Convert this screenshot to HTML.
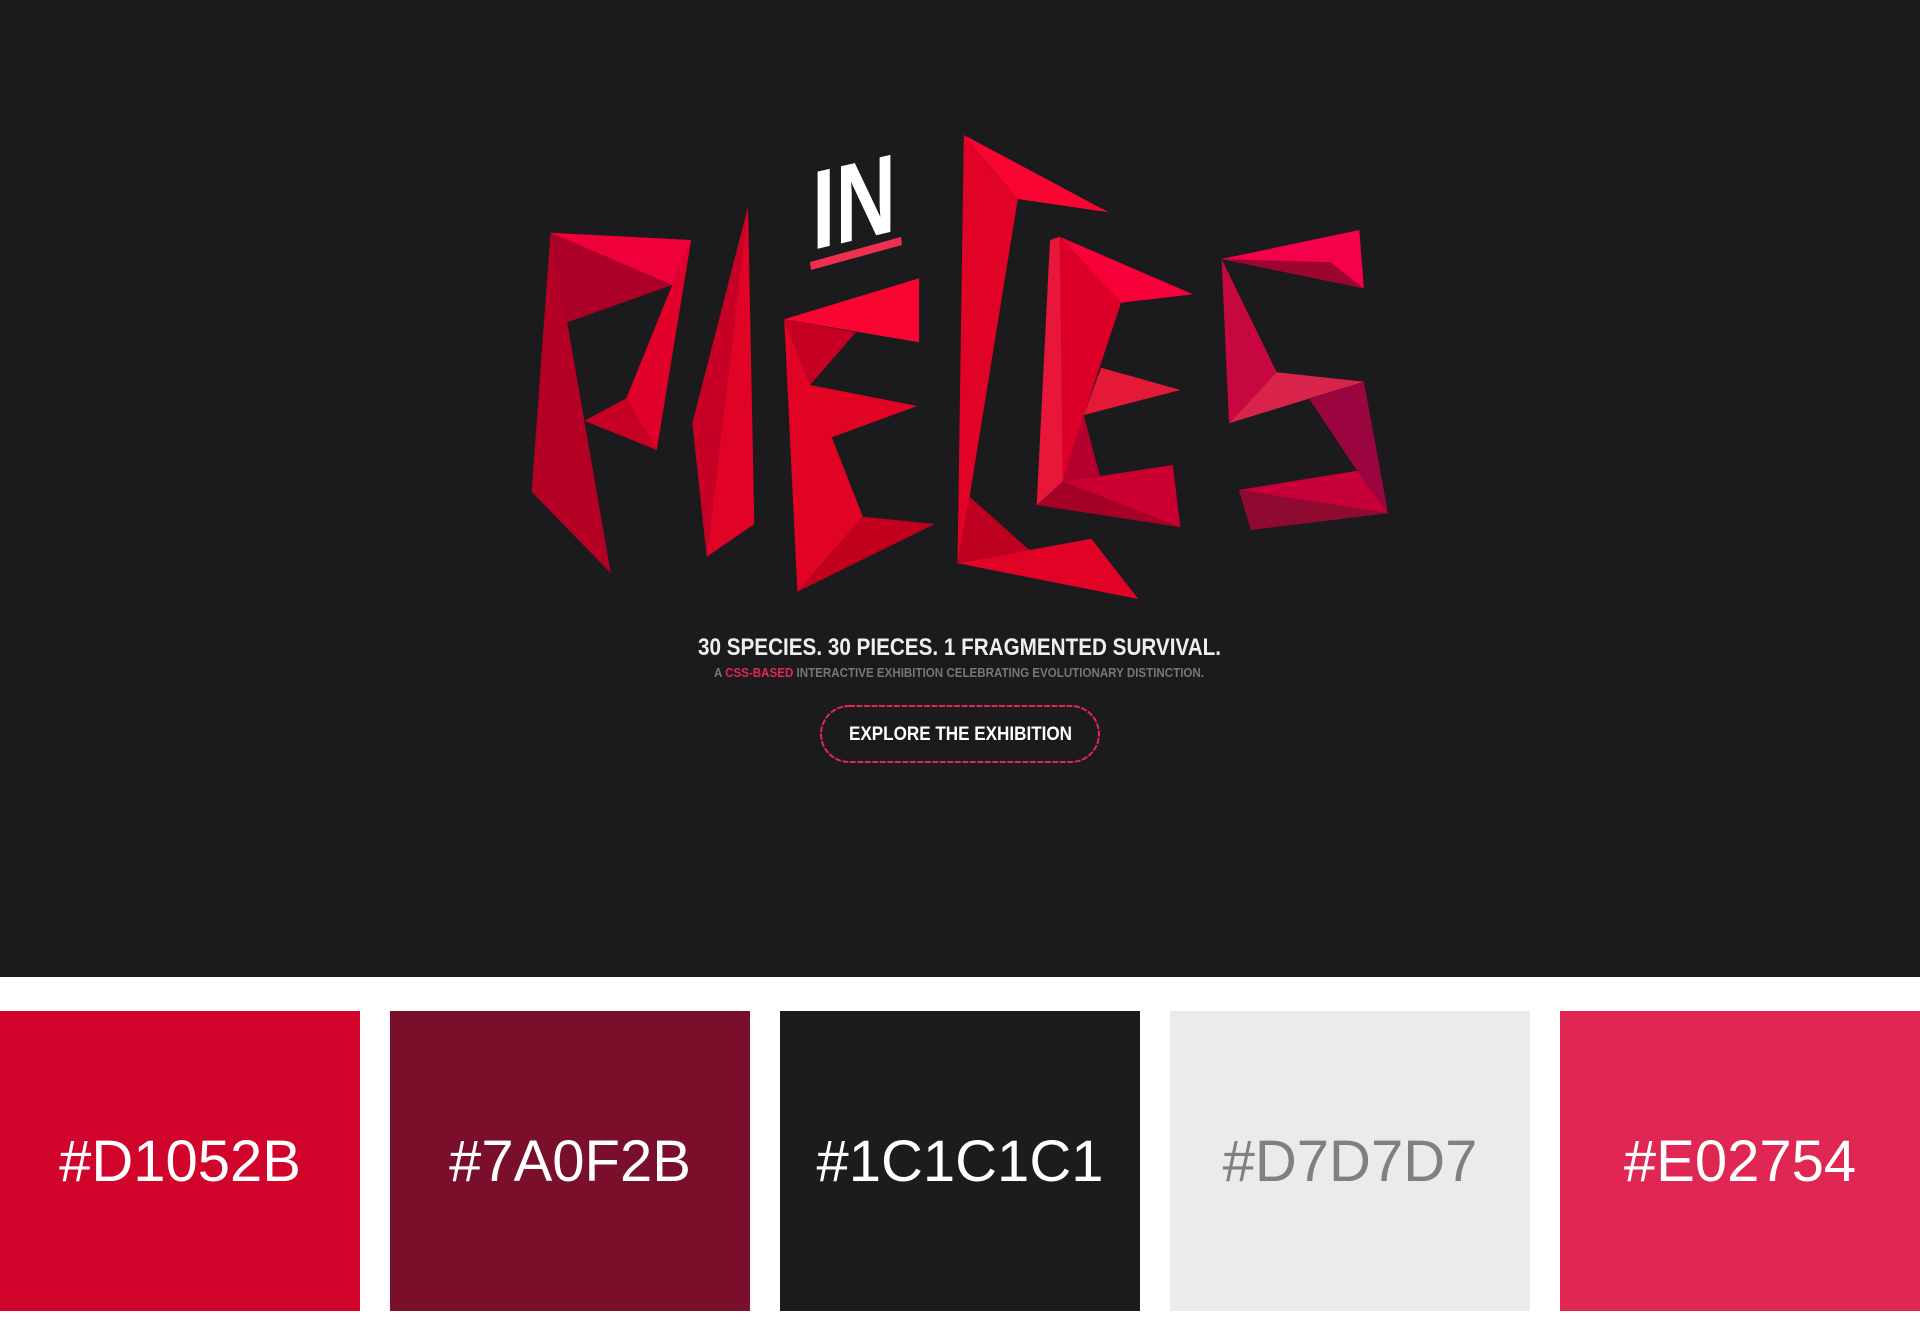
<!DOCTYPE html>
<html><head><meta charset="utf-8"><style>
html,body{margin:0;padding:0;background:#fff;width:1920px;height:1340px;overflow:hidden}
.sw{position:absolute;top:1011px;width:360px;height:300px;display:flex;align-items:center;justify-content:center;font-family:"Liberation Sans",sans-serif;font-size:58px;color:#fff}
</style></head><body>
<svg style="position:absolute;left:0;top:0" width="1920" height="977" viewBox="0 0 1920 977">
<rect width="1920" height="977" fill="#1b1b1d"/>
<!-- P -->
<polygon points="550.5,232.7 691.2,240 672.2,285" fill="#f0003a"/>
<polygon points="550.5,232.7 672.2,285 567.2,322.3" fill="#ad0028"/>
<polygon points="691.2,240 656.7,450 626.3,398.3 672.2,285" fill="#e0002a"/>
<polygon points="626.3,398.3 584.4,420.7 656.7,450" fill="#c80025"/>
<polygon points="550.5,232.7 567.2,322.3 610.8,573.3 531.6,491.7" fill="#b50025"/>
<!-- I -->
<polygon points="748,206.7 692.3,423.3 706.7,556.7" fill="#c70025"/>
<polygon points="748,206.7 706.7,556.7 754.3,524" fill="#e00326"/>
<!-- E -->
<polygon points="784.2,319.3 810,385 917.3,406 831.8,437.3 862.8,516.7 797.4,591.7" fill="#e00324"/>
<polygon points="784.2,319.3 919.1,278.3 919.1,342.3" fill="#f80532"/>
<polygon points="784.2,319.3 855.9,332.3 810,385" fill="#c50022"/>
<polygon points="862.8,516.7 934.6,524 797.4,591.7" fill="#c0001d"/>
<!-- C -->
<polygon points="963.8,135 1108.5,212.3 1017.8,199" fill="#f80532"/>
<polygon points="963.8,135 1017.8,199 969.6,496.7 957.5,563.3" fill="#e00326"/>
<polygon points="969.6,496.7 1029.3,550 957.5,563.3" fill="#bd0020"/>
<polygon points="957.5,563.3 1091.3,538.7 1138.3,599" fill="#e00326"/>
<!-- E2 -->
<polygon points="1059.7,236.7 1121.1,302.7 1083.8,415 1062.6,481.7 1036.7,505" fill="#dc0028"/>
<polygon points="1059.7,236.7 1050,240 1036.7,505 1062.6,481.7" fill="#e8173a"/>
<polygon points="1059.7,236.7 1192.9,294.3 1121.1,302.7" fill="#f8003a"/>
<polygon points="1101,367.7 1180.3,390 1083.8,415" fill="#e41837"/>
<polygon points="1083.8,415 1099.9,476 1062.6,481.7" fill="#b5002f"/>
<polygon points="1062.6,481.7 1172.8,465 1180.3,527.3" fill="#cc0030"/>
<polygon points="1036.7,505 1062.6,481.7 1180.3,527.3" fill="#a50025"/>
<!-- S -->
<polygon points="1221.6,259 1359.3,230 1363.9,288.3" fill="#f5004a"/>
<polygon points="1221.6,259 1330.6,262.3 1363.9,288.3" fill="#9c0530"/>
<polygon points="1221.6,259 1276.7,372.3 1229,423.3" fill="#c70840"/>
<polygon points="1276.7,372.3 1363.9,381.7 1229,423.3" fill="#d8234a"/>
<polygon points="1309.4,399 1363.9,381.7 1388,513.3 1357,470.7" fill="#9a0540"/>
<polygon points="1238.8,490 1357,470.7 1388,513.3" fill="#c8003a"/>
<polygon points="1238.8,490 1388,513.3 1250.9,530" fill="#8e0a30"/>
<!-- IN -->
<g transform="translate(812,250) skewY(-13)">
<text x="0" y="0" font-family="Liberation Sans,sans-serif" font-weight="bold" font-size="112" fill="#fff" textLength="84" lengthAdjust="spacingAndGlyphs">IN</text>
</g>
<polygon points="810,262 901,237 902,245 811,270" fill="#ee3050"/>
<!-- text -->
<text x="698" y="655" font-family="Liberation Sans,sans-serif" font-weight="bold" font-size="24" fill="#eee" textLength="523" lengthAdjust="spacingAndGlyphs">30 SPECIES. 30 PIECES. 1 FRAGMENTED SURVIVAL.</text>
<text x="714" y="677" font-family="Liberation Sans,sans-serif" font-weight="bold" font-size="13" fill="#76767a" textLength="490" lengthAdjust="spacingAndGlyphs">A <tspan fill="#e02754">CSS-BASED</tspan> INTERACTIVE EXHIBITION CELEBRATING EVOLUTIONARY DISTINCTION.</text>
<rect x="821" y="706" width="278" height="56" rx="28" fill="none" stroke="#e02754" stroke-width="2" stroke-dasharray="6 1.5"/>
<text x="849" y="740" font-family="Liberation Sans,sans-serif" font-weight="bold" font-size="19" fill="#fff" textLength="223" lengthAdjust="spacingAndGlyphs">EXPLORE THE EXHIBITION</text>
</svg>
<div class="sw" style="left:0;background:#d1052b">#D1052B</div>
<div class="sw" style="left:390px;background:#7a0f2b">#7A0F2B</div>
<div class="sw" style="left:780px;background:#1c1c1c">#1C1C1C1</div>
<div class="sw" style="left:1170px;background:#ebebeb;color:#808080">#D7D7D7</div>
<div class="sw" style="left:1560px;background:#e02754">#E02754</div>
</body></html>
